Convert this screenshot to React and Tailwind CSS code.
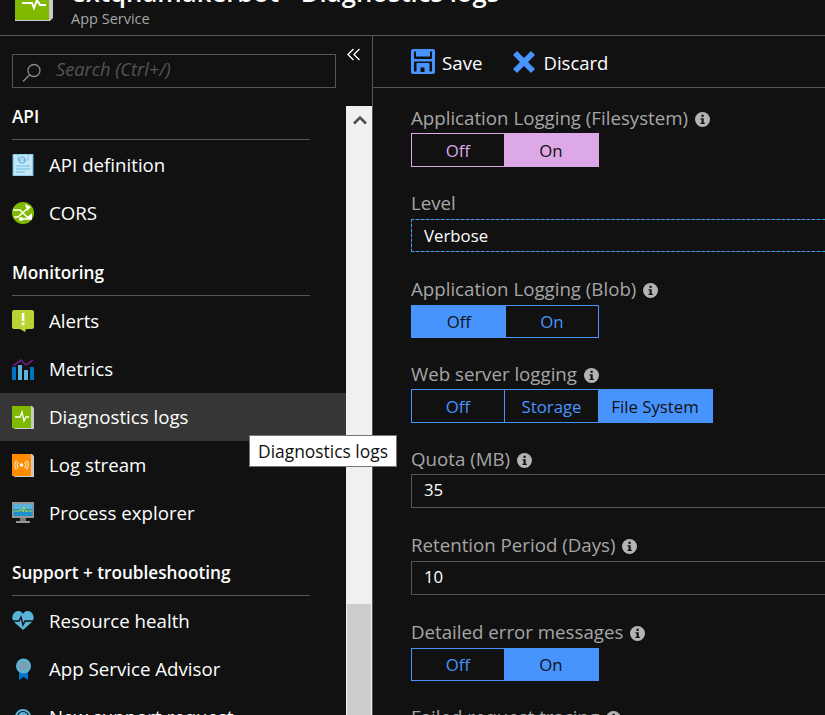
import React from "react";

const font = { fontFamily: '"Open Sans", "Noto Sans", sans-serif' };

function BookIcon({ bg, children }) {
  return (
    <svg width="22" height="23" viewBox="0 0 22 23">
      <path d="M1 0h19l2 2v21H3l-2-1z" fill="#c9c9c9" />
      <rect x="0" y="0" width="19" height="22" fill={bg} />
      {children}
    </svg>
  );
}

function ApiIcon() {
  return (
    <svg width="22" height="22" viewBox="0 0 22 22">
      <rect x="1" y="0" width="20" height="22" fill="#c5e6f7" />
      <path d="M1 0h20v22H1z" fill="none" stroke="#5fb3dc" strokeWidth="1" />
      <path d="M6 0v6h10V0" fill="none" stroke="#7fc3e4" strokeWidth="1" />
      <circle cx="10" cy="6" r="3" fill="none" stroke="#5fb3dc" strokeWidth="1.2" />
      <path d="M4 12h14M4 15h14M4 18h9" stroke="#6dbbe0" strokeWidth="1.2" />
    </svg>
  );
}

function CorsIcon() {
  return (
    <svg width="22" height="22" viewBox="0 0 22 22">
      <circle cx="11" cy="11" r="11" fill="#7fb900" />
      <path d="M1 8h7l8 8M2 15h4l9-8" fill="none" stroke="#fff" strokeWidth="1.600" />
      <path d="M13 2l6 3-4 4zM20 11v7l-6-2z" fill="#fff" />
      <path d="M10 17h8" stroke="#fff" strokeWidth="1.600" />
      <circle cx="9" cy="17" r="2" fill="#fff" />
    </svg>
  );
}

function AlertIcon() {
  return (
    <svg width="22" height="22" viewBox="0 0 22 22">
      <path d="M2 0h18a2 2 0 0 1 2 2v15a2 2 0 0 1-2 2h-6l-1 3-5-3H2a2 2 0 0 1-2-2V2a2 2 0 0 1 2-2z" fill="#b8d432" />
      <rect x="9.8" y="3" width="2.6" height="8" fill="#fff" />
      <rect x="9.8" y="12.5" width="2.6" height="2.6" fill="#fff" />
    </svg>
  );
}

function MetricsIcon() {
  return (
    <svg width="22" height="22" viewBox="0 0 22 22">
      <path d="M1 8l8-6 5 5 7-5" fill="none" stroke="#68217a" strokeWidth="1.6" />
      <rect x="0" y="9" width="4" height="13" fill="#0072c6" />
      <rect x="6" y="7" width="4" height="15" fill="#59b4d9" />
      <rect x="12" y="12" width="4" height="10" fill="#59b4d9" />
      <rect x="18" y="9" width="4" height="13" fill="#0072c6" />
    </svg>
  );
}

function ProcessIcon() {
  return (
    <svg width="22" height="22" viewBox="0 0 22 22">
      <rect x="0" y="0" width="22" height="16" fill="#959595" />
      <rect x="1.5" y="2" width="19" height="12" fill="#1f8fcf" />
      <rect x="1.5" y="2" width="19" height="5" fill="#59b4d9" />
      <path d="M2 9h6l1-2 2 3 1-5 2 5 1-1h5" fill="none" stroke="#b8d432" strokeWidth="1" />
      <rect x="8" y="16" width="6" height="3" fill="#7a7a7a" />
      <rect x="4" y="19" width="14" height="2" fill="#959595" />
    </svg>
  );
}

function HeartIcon() {
  return (
    <svg width="22" height="20" viewBox="0 0 22 20">
      <path d="M11 19L2 11C-2 6 2 0 6 0c2.500 0 4 1 5 3 1-2 2.500-3 5-3 4 0 8 6 4 11z" fill="#59b4d9" />
      <path d="M0 10h7l2-4 2 8 2-4h9" fill="none" stroke="#111111" strokeWidth="1.4" />
    </svg>
  );
}

function AdvisorIcon() {
  return (
    <svg width="22" height="22" viewBox="0 0 22 22">
      <path d="M7 13h9v9l-4.500-3L7 22z" fill="#0072c6" />
      <circle cx="11.500" cy="8" r="7.500" fill="#59b4d9" />
      <circle cx="11.500" cy="8" r="5" fill="#7f9fb0" />
    </svg>
  );
}

function SupportIcon() {
  return (
    <svg width="22" height="22" viewBox="0 0 22 22">
      <path d="M4 11a7 7 0 0 1 14 0" fill="none" stroke="#59b4d9" strokeWidth="2" />
      <circle cx="11" cy="11" r="5" fill="#59b4d9" />
    </svg>
  );
}

function InfoIcon() {
  return (
    <svg width="15" height="15" viewBox="0 0 15 15" className="shrink-0 mt-[2px]">
      <circle cx="7.500" cy="7.500" r="7.500" fill="#b4b4b4" />
      <rect x="6.500" y="2.700" width="2.200" height="2.200" fill="#111111" />
      <path d="M5.500 6.200h3.200v4.500h1.100v1.300H5.500v-1.300h1.100V7.500H5.500z" fill="#111111" />
    </svg>
  );
}

function NavRow({ icon, label, active }) {
  return (
    <div className={`flex items-center h-12 pl-3 ${active ? "bg-[#363636]" : ""}`}>
      <div className="w-[37px] shrink-0 flex items-center">{icon}</div>
      <span className="text-[18.700px] text-white whitespace-nowrap">{label}</span>
    </div>
  );
}

function NavSection({ title, first, children }) {
  return (
    <div className={first ? "" : "mt-[25px]"}>
      <div className="mx-3 w-[298px] h-[34px] border-b border-[#555555] text-[17.200px] font-semibold text-white leading-[22px]">
        {title}
      </div>
      <div className="mt-px">{children}</div>
    </div>
  );
}

function Toggle({ options, active, accent = "blue", height }) {
  const pink = accent === "pink";
  const nudge = height === "h-[34px]" ? "mt-[2px]" : "";
  return (
    <div className={`flex w-fit border ${height} ${pink ? "border-[#dda8e6]" : "border-[#4894fe]"}`}>
      {options.map((o, i) => {
        const on = i === active;
        const sep = i > 0 && !on && i - 1 !== active;
        let cls = pink ? "text-[#dda8e6]" : "text-[#4894fe]";
        if (on) cls = pink ? "bg-[#dda8e6] text-[#111111]" : "bg-[#4894fe] text-[#111111]";
        return (
          <div
            key={o.t}
            className={`${o.w} flex items-center justify-center text-[16.800px] ${cls} ${sep ? "border-l border-[#4894fe]" : ""}`}
          >
            <span className={nudge}>{o.t}</span>
          </div>
        );
      })}
    </div>
  );
}

function Field({ label, info = true, extra, children }) {
  return (
    <div className={extra ? "mt-[23px]" : "mt-[21px]"}>
      <div className={`h-[30px] flex items-center gap-[7px] text-[18.700px] text-[#a6a6a6] whitespace-nowrap ${extra ? "pb-[2px]" : ""}`}>
        <span>{label}</span>
        {info && <InfoIcon />}
      </div>
      {children}
    </div>
  );
}

function TextBox({ value, height }) {
  return (
    <div className={`${height} w-[calc(100%+10px)] border border-[#555555] flex items-center pl-3 pb-[2px] text-[16.800px] text-white`}>
      {value}
    </div>
  );
}

const off = { t: "Off", w: "w-[92px]" };
const onOpt = { t: "On", w: "w-[94px]" };

export default function App() {
  return (
    <div style={font} className="relative w-[825px] h-[715px] overflow-hidden bg-[#111111] flex flex-col">
      {/* blade header, cut off at the top of the shot */}
      <header className="h-[36px] shrink-0 border-b border-[#555555] flex pl-[15px] overflow-hidden">
        <div className="-mt-[2px] mr-[18px] shrink-0">
          <svg width="38" height="24" viewBox="0 0 38 24">
            <path d="M0 0h38v20l-3 3H0z" fill="#c9c9c9" />
            <path d="M0 0h34v22H1l-1-1z" fill="#7fb900" />
            <path d="M7 5h10l2 5 3-8 3 5h6" fill="none" stroke="#fff" strokeWidth="2" />
          </svg>
        </div>
        <div className="-mt-[25px]">
          <div className="text-[25.700px] font-semibold text-white leading-[36px] whitespace-nowrap">
            extqnamakerbot - Diagnostics logs
          </div>
          <div className="text-[14.500px] text-[#a6a6a6] leading-[20px] -mt-[2px]">App Service</div>
        </div>
      </header>

      <div className="flex flex-1 min-h-0">
        {/* left menu */}
        <aside className="w-[373px] shrink-0 border-r border-[#555555] flex flex-col">
          <div className="h-[70px] shrink-0 flex items-start">
            <div className="mt-[18px] ml-3 w-[324px] h-[34px] border border-[#555555] flex items-center">
              <svg width="20" height="20" viewBox="0 0 20 20" className="ml-[9px] mt-[3px]">
                <circle cx="12" cy="7.500" r="6" fill="none" stroke="#8a8a8a" strokeWidth="1.300" />
                <path d="M7.500 12L1 18.500" stroke="#8a8a8a" strokeWidth="1.500" />
              </svg>
              <span className="ml-[14px] pb-[2px] text-[18.200px] italic text-[#555555]">Search (Ctrl+/)</span>
            </div>
            <svg width="14" height="14" viewBox="0 0 14 14" className="ml-[11px] mt-[12px]">
              <path d="M6.500 1L1 6.500 6.500 12M12.500 1L7 6.500 12.500 12" fill="none" stroke="#ffffff" strokeWidth="1.300" />
            </svg>
          </div>
          <div className="flex flex-1 min-h-0">
            <nav className="w-[346px] shrink-0 overflow-hidden">
              <NavSection title="API" first>
                <NavRow icon={<ApiIcon />} label="API definition" />
                <NavRow icon={<CorsIcon />} label="CORS" />
              </NavSection>
              <NavSection title="Monitoring">
                <NavRow icon={<AlertIcon />} label="Alerts" />
                <NavRow icon={<MetricsIcon />} label="Metrics" />
                <NavRow
                  active
                  label="Diagnostics logs"
                  icon={
                    <BookIcon bg="#7fb900">
                      <path d="M3 11h5l2-5 2 9 2-4h3" fill="none" stroke="#fff" strokeWidth="1.300" />
                    </BookIcon>
                  }
                />
                <NavRow
                  label="Log stream"
                  icon={
                    <BookIcon bg="#ff8c00">
                      <circle cx="9.500" cy="11" r="1.800" fill="#fff" />
                      <path d="M6.500 8a4 4 0 0 0 0 6M12.500 8a4 4 0 0 1 0 6M4.500 6.500a7 7 0 0 0 0 9M14.500 6.500a7 7 0 0 1 0 9" fill="none" stroke="#ffe3bd" strokeWidth="1.200" />
                    </BookIcon>
                  }
                />
                <NavRow icon={<ProcessIcon />} label="Process explorer" />
              </NavSection>
              <NavSection title="Support + troubleshooting">
                <NavRow icon={<HeartIcon />} label="Resource health" />
                <NavRow icon={<AdvisorIcon />} label="App Service Advisor" />
                <NavRow icon={<SupportIcon />} label="New support request" />
              </NavSection>
            </nav>
            {/* scrollbar */}
            <div className="w-[26px] shrink-0 bg-[#f0f0f0] flex flex-col">
              <svg width="26" height="18" viewBox="0 0 26 18" className="mt-[6px] shrink-0">
                <path d="M8 11.500L14 5.500l6 6" fill="none" stroke="#505050" strokeWidth="2.600" />
              </svg>
              <div className="mt-[474px] flex-1 mx-px bg-[#cdcdcd]" />
            </div>
          </div>
        </aside>

        {/* settings blade */}
        <main className="flex-1 min-w-0 flex flex-col">
          <div className="h-[52px] shrink-0 border-b border-[#555555] flex items-center pl-[38px]">
            <svg width="24" height="25" viewBox="0 0 24 25">
              <path
                fillRule="evenodd"
                d="M2 0h20a2 2 0 0 1 2 2v21a2 2 0 0 1-2 2H2a2 2 0 0 1-2-2V2a2 2 0 0 1 2-2zM3 2.500V9a1 1 0 0 0 1 1h16a1 1 0 0 0 1-1V2.500h-2V7.500H5V2.500zM3 22.500h2.500V15a1 1 0 0 1 1-1h11a1 1 0 0 1 1 1v7.500H21V12.500H3zM9.500 18.500v4.500h4v-4.500z"
                fill="#4894fe"
              />
            </svg>
            <span className="ml-[7px] pt-[3px] text-[18.700px] text-white">Save</span>
            <svg width="22" height="22" viewBox="0 0 22 22" className="ml-[31px]">
              <path d="M4 0l7 7 7-7 4 4-7 7 7 7-4 4-7-7-7 7-4-4 7-7-7-7z" fill="#4894fe" />
            </svg>
            <span className="ml-[8px] pt-[3px] text-[18.500px] text-white">Discard</span>
          </div>

          <div className="pl-[38px] overflow-hidden -mt-[6px]">
            <Field label="Application Logging (Filesystem)">
              <Toggle accent="pink" height="h-[34px]" options={[off, onOpt]} active={1} />
            </Field>
            <Field label="Level" info={false}>
              <div className="mt-px h-[33px] w-[calc(100%+10px)] border border-[#7a1f8a] outline outline-dashed -outline-offset-1 outline-[#1fb6d9] flex items-center pl-3 text-[16.800px] text-white">
                Verbose
              </div>
            </Field>
            <Field label="Application Logging (Blob)" extra>
              <Toggle
                height="h-[33px]"
                options={[{ t: "Off", w: "w-[94px]" }, { t: "On", w: "w-[92px]" }]}
                active={0}
              />
            </Field>
            <Field label="Web server logging">
              <Toggle
                height="h-[34px]"
                options={[off, { t: "Storage", w: "w-[94px]" }, { t: "File System", w: "w-[114px]" }]}
                active={2}
              />
            </Field>
            <Field label="Quota (MB)">
              <TextBox value="35" height="h-[34px]" />
            </Field>
            <Field label="Retention Period (Days)" extra>
              <TextBox value="10" height="h-[34px]" />
            </Field>
            <Field label="Detailed error messages" extra>
              <Toggle height="h-[33px]" options={[off, onOpt]} active={1} />
            </Field>
            <Field label="Failed request tracing" />
          </div>
        </main>
      </div>

      {/* hover tooltip over the menu */}
      <div className="absolute left-[249px] top-[435px] h-[32px] w-[148px] border border-[#767676] bg-white flex items-center justify-center text-[17.400px] text-[#111111] whitespace-nowrap">
        Diagnostics logs
      </div>
    </div>
  );
}
